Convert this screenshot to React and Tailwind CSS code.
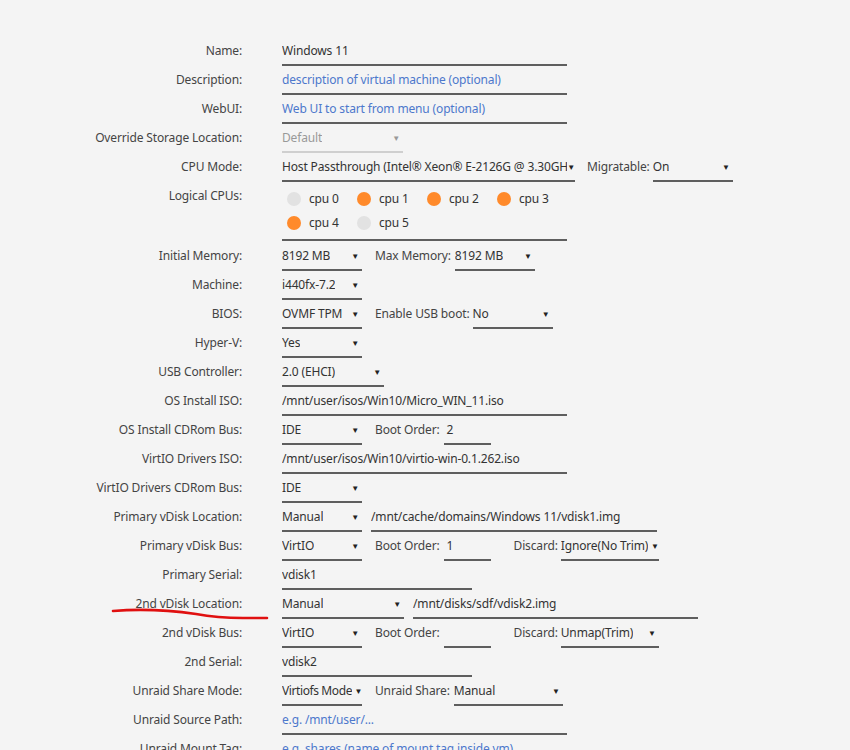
import React from 'react';

const Arrow = ({ muted }) => (
  <span className={`text-[8px] leading-none shrink-0 ${muted ? 'text-[#999]' : 'text-[#222]'}`}>▼</span>
);

const Input = ({ value, placeholder, className = 'w-[285px]' }) => (
  <div className={`h-[28px] flex items-center border-b-2 border-[#5e5e5e] whitespace-nowrap overflow-hidden ${className}`}>
    {value ? (
      <span className="text-[#333]">{value}</span>
    ) : (
      <span className="text-[#4d78cc]">{placeholder}</span>
    )}
  </div>
);

const Select = ({ value, className = 'w-[80px] pr-[3px]', muted }) => (
  <div
    className={`h-[28px] flex items-center justify-between border-b-2 ${
      muted ? 'border-[#cfcfcf] text-[#999]' : 'border-[#5e5e5e] text-[#333]'
    } ${className}`}
  >
    <span className="whitespace-nowrap overflow-hidden min-w-0">{value}</span>
    <Arrow muted={muted} />
  </div>
);

const Tag = ({ children, className = 'ml-[13px] mr-[4px]' }) => (
  <span className={`h-[26px] flex items-center whitespace-nowrap text-[#444] ${className}`}>{children}</span>
);

const Row = ({ label, children }) => (
  <div className="flex items-start h-[29px]">
    <div className="w-[242px] h-[26px] flex items-center justify-end text-[#444] whitespace-nowrap">{label}</div>
    <div className="ml-[40px] flex items-start">{children}</div>
  </div>
);

const cpus = [
  { name: 'cpu 0', on: false },
  { name: 'cpu 1', on: true },
  { name: 'cpu 2', on: true },
  { name: 'cpu 3', on: true },
  { name: 'cpu 4', on: true },
  { name: 'cpu 5', on: false },
];

const Cpu = ({ cpu }) => (
  <div className="w-[70px] h-[24px] flex items-center">
    <span className={`ml-[5px] w-[14px] h-[14px] rounded-full ${cpu.on ? 'bg-[#ff8a2b]' : 'bg-[#e2e2e2]'}`} />
    <span className="ml-[8px] text-[#333]">{cpu.name}</span>
  </div>
);

export default function App() {
  return (
    <div className="relative min-h-screen bg-[#f4f4f4] pt-[38px] text-[12px] tracking-[-0.15px] font-['Noto_Sans',sans-serif]">
      <Row label="Name:">
        <Input value="Windows 11" />
      </Row>
      <Row label="Description:">
        <Input placeholder="description of virtual machine (optional)" />
      </Row>
      <Row label="WebUI:">
        <Input placeholder="Web UI to start from menu (optional)" />
      </Row>
      <Row label="Override Storage Location:">
        <Select value="Default" muted className="w-[121px] pr-[3px]" />
      </Row>
      <Row label="CPU Mode:">
        <Select value="Host Passthrough (Intel® Xeon® E-2126G @ 3.30GHz)" className="w-[293px] pr-0" />
        <Tag className="ml-[12px] mr-[3px]">Migratable:</Tag>
        <Select value="On" className="w-[80px] pr-[3px]" />
      </Row>

      <div className="flex items-start h-[60px]">
        <div className="w-[242px] h-[26px] flex items-center justify-end text-[#444]">Logical CPUs:</div>
        <div className="ml-[40px] w-[285px] pt-[4px] pb-[4px] border-b-2 border-[#5e5e5e]">
          <div className="flex">
            {cpus.slice(0, 4).map((c) => (
              <Cpu key={c.name} cpu={c} />
            ))}
          </div>
          <div className="flex">
            {cpus.slice(4).map((c) => (
              <Cpu key={c.name} cpu={c} />
            ))}
          </div>
        </div>
      </div>

      <Row label="Initial Memory:">
        <Select value="8192 MB" />
        <Tag>Max Memory:</Tag>
        <Select value="8192 MB" />
      </Row>
      <Row label="Machine:">
        <Select value="i440fx-7.2" />
      </Row>
      <Row label="BIOS:">
        <Select value="OVMF TPM" />
        <Tag className="ml-[13px] mr-[3px]">Enable USB boot:</Tag>
        <Select value="No" />
      </Row>
      <Row label="Hyper-V:">
        <Select value="Yes" />
      </Row>
      <Row label="USB Controller:">
        <Select value="2.0 (EHCI)" className="w-[102px] pr-[3px]" />
      </Row>
      <Row label="OS Install ISO:">
        <Input value="/mnt/user/isos/Win10/Micro_WIN_11.iso" />
      </Row>
      <Row label="OS Install CDRom Bus:">
        <Select value="IDE" />
        <Tag>Boot Order:</Tag>
        <Input value="2" className="w-[47px] pl-[3px]" />
      </Row>
      <Row label="VirtIO Drivers ISO:">
        <Input value="/mnt/user/isos/Win10/virtio-win-0.1.262.iso" />
      </Row>
      <Row label="VirtIO Drivers CDRom Bus:">
        <Select value="IDE" />
      </Row>
      <Row label="Primary vDisk Location:">
        <Select value="Manual" />
        <div className="ml-[9px]">
          <Input value="/mnt/cache/domains/Windows 11/vdisk1.img" className="w-[286px]" />
        </div>
      </Row>
      <Row label="Primary vDisk Bus:">
        <Select value="VirtIO" />
        <Tag>Boot Order:</Tag>
        <Input value="1" className="w-[47px] pl-[3px]" />
        <Tag className="ml-[23px] mr-[3px]">Discard:</Tag>
        <Select value="Ignore(No Trim)" className="w-[98px] pr-0" />
      </Row>
      <Row label="Primary Serial:">
        <Input value="vdisk1" className="w-[190px]" />
      </Row>
      <Row label="2nd vDisk Location:">
        <Select value="Manual" className="w-[122px] pr-[3px]" />
        <div className="ml-[9px]">
          <Input value="/mnt/disks/sdf/vdisk2.img" className="w-[285px]" />
        </div>
      </Row>
      <Row label="2nd vDisk Bus:">
        <Select value="VirtIO" />
        <Tag>Boot Order:</Tag>
        <Input value="" placeholder="" className="w-[47px] pl-[3px]" />
        <Tag className="ml-[23px] mr-[3px]">Discard:</Tag>
        <Select value="Unmap(Trim)" className="w-[98px] pr-[3px]" />
      </Row>
      <Row label="2nd Serial:">
        <Input value="vdisk2" className="w-[190px]" />
      </Row>
      <Row label="Unraid Share Mode:">
        <Select value="Virtiofs Mode" className="w-[80px] pr-0 tracking-[-0.4px]" />
        <Tag>Unraid Share:</Tag>
        <Select value="Manual" className="w-[109px] pr-[3px]" />
      </Row>
      <Row label="Unraid Source Path:">
        <Input placeholder="e.g. /mnt/user/..." />
      </Row>
      <Row label="Unraid Mount Tag:">
        <Input placeholder="e.g. shares (name of mount tag inside vm)" />
      </Row>

      {/* red hand-drawn annotation under "2nd vDisk Location" */}
      <svg
        className="absolute left-[108px] top-[604px] pointer-events-none"
        width="165"
        height="20"
        viewBox="0 0 165 20"
        fill="none"
      >
        <path
          d="M5 7 C 30 5, 60 6, 88 10 C 104 13, 118 14, 135 14 L 159 14"
          stroke="#e01010"
          strokeWidth="2.6"
          strokeLinecap="round"
        />
      </svg>
    </div>
  );
}
